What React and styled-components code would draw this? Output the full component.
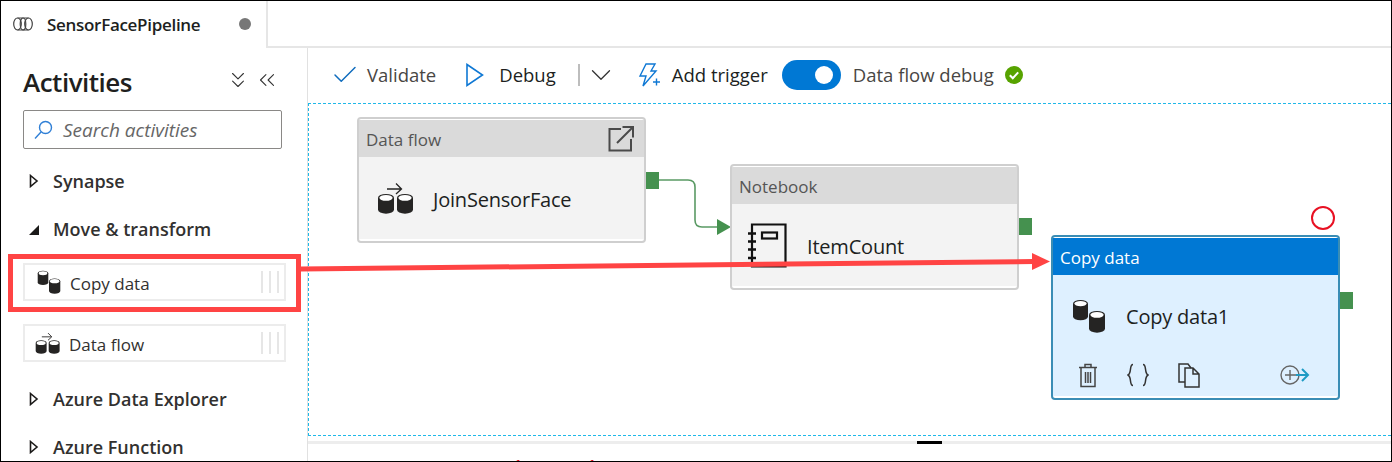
import React from 'react'
import styled, { createGlobalStyle } from 'styled-components'
import { ChevronsDown, ChevronsLeft, ChevronDown, Check } from 'lucide-react'

const GlobalStyle = createGlobalStyle`
  html, body {
    margin: 0;
    padding: 0;
    background: #fff;
  }
  * {
    box-sizing: border-box;
  }
`

export default function App() {
  return (
    <Frame>
      <GlobalStyle />
      <TabBar>
        <Tab>
          <PipelineIcon />
          <TabTitle>SensorFacePipeline</TabTitle>
          <UnsavedDot />
        </Tab>
      </TabBar>
      <Body>
        <Sidebar>
          <SideHeader>
            <SideTitle>Activities</SideTitle>
            <SideTools>
              <ChevronsDown size={26} strokeWidth={1} />
              <ChevronsLeft size={26} strokeWidth={1} />
            </SideTools>
          </SideHeader>
          <SearchBox>
            <SearchIcon />
            <SearchText>Search activities</SearchText>
          </SearchBox>
          <Group>
            <Closed />
            Synapse
          </Group>
          <Group>
            <Open />
            Move &amp; transform
          </Group>
          <Item $first>
            <CopyDataIcon size={24} />
            <ItemLabel $gap={9}>Copy data</ItemLabel>
            <Grip />
          </Item>
          <Item>
            <DataFlowIcon size={26} $shift={-2} />
            <ItemLabel $gap={8}>Data flow</ItemLabel>
            <Grip />
          </Item>
          <Group $after>
            <Closed />
            Azure Data Explorer
          </Group>
          <Group>
            <Closed />
            Azure Function
          </Group>
        </Sidebar>
        <Main>
          <Toolbar>
            <Check size={30} color="#0f6cbd" strokeWidth={1.2} />
            <ToolLabel $muted $gap={7}>Validate</ToolLabel>
            <PlayIcon />
            <ToolLabel $gap={15}>Debug</ToolLabel>
            <ToolDivider />
            <ChevronDown size={34} color="#333" strokeWidth={0.9} />
            <BoltIcon />
            <ToolLabel $gap={11}>Add trigger</ToolLabel>
            <Toggle>
              <Knob />
            </Toggle>
            <ToolLabel $muted $gap={12}>Data flow debug</ToolLabel>
            <StatusIcon />
          </Toolbar>
          <Canvas>
            <Connector />
            <Node $x={48} $y={13}>
              <NodeHeader>
                Data flow
                <OpenIcon />
              </NodeHeader>
              <NodeBody>
                <DataFlowIcon size={38} />
                <NodeName>JoinSensorFace</NodeName>
              </NodeBody>
              <Port $top={53} />
            </Node>
            <Node $x={421} $y={60}>
              <NodeHeader>Notebook</NodeHeader>
              <NodeBody>
                <NotebookIcon />
                <NodeName $gap={20}>ItemCount</NodeName>
              </NodeBody>
              <Port $top={52} />
            </Node>
            <Node $x={742} $y={131} $selected>
              <NodeHeader $selected>Copy data</NodeHeader>
              <NodeBody $selected>
                <CopyDataIcon size={34} />
                <NodeName $gap={20}>Copy data1</NodeName>
              </NodeBody>
              <NodeActions>
                <TrashIcon />
                <BracesIcon />
                <PagesIcon />
                <AddOutputIcon />
              </NodeActions>
              <Port $top={55} />
              <ErrorRing />
            </Node>
          </Canvas>
          <Splitter>
            <SplitterHandle />
          </Splitter>
          <Output>
            <RedMark $x={206}>1</RedMark>
            <RedMark $x={280}>1</RedMark>
          </Output>
        </Main>
      </Body>
      <Callout />
    </Frame>
  )
}

function Cylinder({ x, y, w, h }) {
  const ry = w * 0.24
  return (
    <>
      <path
        d={`M${x} ${y + ry}a${w / 2} ${ry} 0 0 1 ${w} 0v${h}a${w / 2} ${ry} 0 0 1 -${w} 0z`}
        fill="#252423"
      />
      <ellipse cx={x + w / 2} cy={y + ry} rx={w / 2 - 1.4} ry={ry - 0.9} fill="#fff" />
    </>
  )
}

function CopyDataIcon({ size }) {
  return (
    <svg width={size} height={size} viewBox="0 0 34 34">
      <Cylinder x={1} y={1} w={15} h={13} />
      <Cylinder x={17} y={12} w={16} h={14} />
    </svg>
  )
}

function DataFlowIcon({ size, $shift }) {
  return (
    <ShiftedSvg $shift={$shift} width={size} height={size} viewBox="0 0 38 38">
      <Cylinder x={1} y={15} w={16} h={12} />
      <Cylinder x={20} y={15} w={16} h={12} />
      <path d="M10 10h14M19 4.500l5.500 5.500-5.500 5" fill="none" stroke="#252423" strokeWidth="1.3" />
    </ShiftedSvg>
  )
}

function PipelineIcon() {
  return (
    <svg width="20" height="14" viewBox="0 0 20 14" fill="none" stroke="#444" strokeWidth="1.2">
      <ellipse cx="4.500" cy="7" rx="3.800" ry="6" />
      <ellipse cx="15.500" cy="7" rx="3.800" ry="6" />
      <path d="M4.500 1h11M4.500 13h11" />
      <ellipse cx="10" cy="7" rx="2.800" ry="6" />
    </svg>
  )
}

function SearchIcon() {
  return (
    <svg width="19" height="20" viewBox="0 0 19 20" fill="none" stroke="#2f7fd6" strokeWidth="1.4">
      <circle cx="11.500" cy="7.500" r="6" />
      <path d="M7 12L1 18.500" />
    </svg>
  )
}

function Closed() {
  return (
    <Caret viewBox="0 0 10 14" fill="none" stroke="#1b1a19" strokeWidth="1.6">
      <path d="M1.500 1.500L8 7 1.500 12.500z" />
    </Caret>
  )
}

function Open() {
  return (
    <Caret viewBox="0 0 12 14">
      <path d="M11 3v10H1z" fill="#1b1a19" />
    </Caret>
  )
}

function Grip() {
  return (
    <GripBox>
      <i />
      <i />
      <i />
    </GripBox>
  )
}

function PlayIcon() {
  return (
    <ToolSvg $left={30} width="18" height="24" viewBox="0 0 18 24" fill="none" stroke="#0f78d4" strokeWidth="1.6">
      <path d="M1 1.500L16.500 12 1 22.500z" />
    </ToolSvg>
  )
}

function BoltIcon() {
  return (
    <ToolSvg $left={20} width="23" height="24" viewBox="0 0 23 24" fill="none" stroke="#0f78d4" strokeWidth="1.4">
      <path d="M8 1h9l-4 7h5L5 23l3-10H2z" />
      <path d="M15 19h7M18.500 15.500v7" />
    </ToolSvg>
  )
}

function StatusIcon() {
  return (
    <ToolSvg $left={11} width="18" height="18" viewBox="0 0 18 18">
      <circle cx="9" cy="9" r="9" fill="#57a300" />
      <path d="M4.800 9.200l3 3 5.400-5.800" fill="none" stroke="#fff" strokeWidth="2" />
    </ToolSvg>
  )
}

function OpenIcon() {
  return (
    <CornerSvg width="27" height="27" viewBox="0 0 27 27" fill="none" stroke="#4a4a4a" strokeWidth="2">
      <path d="M13 4H1.500v21.500H23V14" />
      <path d="M9 18L25 2M14.500 2H25v10.500" />
    </CornerSvg>
  )
}

function NotebookIcon() {
  return (
    <NotebookSvg width="39" height="45" viewBox="0 0 39 45" fill="none" stroke="#111" strokeWidth="2.200">
      <path d="M4 1.500H37.500V43.500H4z" />
      <rect x="14" y="9.500" width="15" height="6" />
      <path d="M0 10.500h8M0 18.500h8M0 26.500h8M0 35h8" strokeWidth="2.400" />
    </NotebookSvg>
  )
}

function TrashIcon() {
  return (
    <svg width="20" height="25" viewBox="0 0 20 25" fill="none" stroke="#444" strokeWidth="1.500">
      <path d="M1 4.500h18M7 4V1.500h6V4M3 5v18.500h14V5M7.500 9v11M10 9v11M12.500 9v11" />
    </svg>
  )
}

function BracesIcon() {
  return (
    <ActionSvg $left={29} width="22" height="24" viewBox="0 0 22 24" fill="none" stroke="#333" strokeWidth="1.500">
      <path d="M6 1.500C2 1.500 5 10 1 12c4 2 1 10.500 5 10.500M16 1.500c4 0 1 8.500 5 10.500-4 2-1 10.500-5 10.500" />
    </ActionSvg>
  )
}

function PagesIcon() {
  return (
    <ActionSvg $left={29} width="22" height="25" viewBox="0 0 22 25" fill="none" stroke="#333" strokeWidth="1.500">
      <path d="M7 19H1V1h9l3 4" />
      <path d="M7 5h8l6 6v13H7zM15 5v6h6" />
    </ActionSvg>
  )
}

function AddOutputIcon() {
  return (
    <ActionSvg $left={80} width="30" height="20" viewBox="0 0 30 20" fill="none" strokeWidth="1.400">
      <circle cx="10" cy="10" r="9" stroke="#666" />
      <path d="M5 10h11M10 5v10" stroke="#666" />
      <path d="M16 10h12M22 4l6 6-6 6" stroke="#1e9bc4" strokeWidth="2" />
    </ActionSvg>
  )
}

function Connector() {
  return (
    <ConnectorSvg width="80" height="70" viewBox="0 0 80 70" fill="none">
      <path d="M0 7h29q7 0 7 7v33q0 7 7 7h15" stroke="#5a9a64" strokeWidth="1.600" />
      <path d="M58 46l14 8-14 8z" fill="#45914f" />
    </ConnectorSvg>
  )
}

function Callout() {
  return (
    <CalloutSvg width="1392" height="462" viewBox="0 0 1392 462" fill="none">
      <rect x="10.500" y="256.500" width="288" height="53" stroke="#ff4444" strokeWidth="5" />
      <path d="M301 269L1034 261.500" stroke="#ff4444" strokeWidth="5" />
      <path d="M1032 253l18 8.500-18 8.500z" fill="#ff4444" />
    </CalloutSvg>
  )
}

const font = `'Open Sans', 'Noto Sans', sans-serif`

const Frame = styled.div`
  position: relative;
  display: flex;
  flex-direction: column;
  width: 1392px;
  height: 462px;
  overflow: hidden;
  border: 1px solid #000;
  background: #fff;
  color: #252423;
  font-family: ${font};
`
const TabBar = styled.header`
  display: flex;
  flex: none;
  height: 47px;
  border-bottom: 2px solid #e6e6e6;
`
const Tab = styled.div`
  display: flex;
  align-items: center;
  width: 267px;
  height: 47px;
  padding: 0 15px 2px 12px;
  background: #fff;
  border-right: 2px solid #e6e6e6;
`
const TabTitle = styled.span`
  margin: 2px 0 0 14px;
  font-size: 17px;
  font-weight: 600;
  letter-spacing: -0.3px;
  color: #201f1e;
`
const UnsavedDot = styled.span`
  width: 12px;
  height: 12px;
  margin-left: auto;
  border-radius: 50%;
  background: #777;
`
const Body = styled.div`
  display: flex;
  flex: 1;
  min-height: 0;
`
const Sidebar = styled.aside`
  flex: none;
  width: 307px;
  padding: 0 22px;
  border-right: 1px solid #e1e1e1;
  overflow: hidden;
`
const SideHeader = styled.div`
  display: flex;
  align-items: center;
  justify-content: space-between;
  height: 62px;
  padding: 6px 5px 0 0;
`
const SideTitle = styled.h2`
  margin: 0;
  font-size: 26px;
  font-weight: 600;
  letter-spacing: -0.5px;
  color: #201f1e;
`
const SideTools = styled.div`
  display: flex;
  gap: 3px;
  margin-top: -5px;
  color: #333;
`
const SearchBox = styled.div`
  display: flex;
  align-items: center;
  width: 259px;
  height: 39px;
  padding-left: 10px;
  border: 1px solid #8a8886;
  border-radius: 2px;
`
const SearchText = styled.span`
  margin-left: 10px;
  font-size: 19px;
  font-style: italic;
  color: #666;
`
const Group = styled.div`
  display: flex;
  align-items: center;
  height: 48px;
  margin-top: ${p => (p.$after ? '13px' : '0')};
  font-size: 18px;
  font-weight: 600;
  white-space: nowrap;
  color: #323130;
  &:nth-of-type(3) {
    margin-top: 8px;
  }
`
const Caret = styled.svg`
  width: 12px;
  height: 14px;
  margin: 0 13px 0 5px;
`
const Item = styled.div`
  display: flex;
  align-items: center;
  width: 263px;
  height: 38px;
  margin-top: ${p => (p.$first ? '10px' : '23px')};
  padding-left: 12px;
  border: 2px solid #ececec;
`
const ItemLabel = styled.span`
  margin-left: ${p => p.$gap}px;
  padding-top: 2px;
  font-size: 17px;
  color: #323130;
`
const GripBox = styled.div`
  display: flex;
  gap: 6px;
  margin-left: auto;
  padding-right: 5px;
  i {
    width: 2px;
    height: 22px;
    background: #e6e6e6;
  }
`
const ShiftedSvg = styled.svg`
  flex: none;
  margin-left: ${p => p.$shift || 0}px;
`
const Main = styled.main`
  position: relative;
  display: flex;
  flex: 1;
  flex-direction: column;
  min-width: 0;
`
const Toolbar = styled.div`
  display: flex;
  align-items: center;
  flex: none;
  height: 55px;
  padding: 0 0 2px 22px;
`
const ToolLabel = styled.span`
  margin-left: ${p => p.$gap}px;
  font-size: 18.5px;
  color: ${p => (p.$muted ? '#484644' : '#201f1e')};
`
const ToolSvg = styled.svg`
  flex: none;
  margin-left: ${p => p.$left}px;
`
const ToolDivider = styled.span`
  width: 2px;
  height: 22px;
  margin: 0 4px 0 22px;
  background: #bdbdbd;
`
const Toggle = styled.div`
  display: flex;
  align-items: center;
  justify-content: flex-end;
  width: 59px;
  height: 30px;
  margin-left: 14px;
  padding-right: 8px;
  border-radius: 15px;
  background: #0078d4;
`
const Knob = styled.span`
  width: 18px;
  height: 18px;
  border-radius: 50%;
  background: #fff;
`
const Canvas = styled.section`
  position: relative;
  flex: none;
  height: 333px;
  border: 1px dashed #1fb8e8;
  border-right: 0;
`
const ConnectorSvg = styled.svg`
  position: absolute;
  left: 350px;
  top: 69px;
`
const Node = styled.article`
  position: absolute;
  left: ${p => p.$x}px;
  top: ${p => p.$y}px;
  display: flex;
  flex-direction: column;
  width: 289px;
  height: ${p => (p.$selected ? '165px' : '126px')};
  padding: 1px 0 2px;
  border: ${p => (p.$selected ? '2px solid #3a8db5' : '2px solid #cfcfcf')};
  border-radius: 4px;
  background: #fff;
`
const NodeHeader = styled.div`
  position: relative;
  display: flex;
  align-items: center;
  flex: none;
  height: 37px;
  padding: 1px 0 0 7px;
  font-size: 17px;
  background: ${p => (p.$selected ? '#0078d4' : '#dadada')};
  color: ${p => (p.$selected ? '#fff' : '#555')};
`
const CornerSvg = styled.svg`
  position: absolute;
  right: 9px;
  top: 5px;
`
const NodeBody = styled.div`
  display: flex;
  align-items: center;
  flex: 1;
  min-height: 0;
  padding-left: ${p => (p.$selected ? '19px' : '18px')};
  background: ${p => (p.$selected ? '#def0ff' : '#f3f3f3')};
`
const NodeName = styled.span`
  margin: 2px 0 0 ${p => p.$gap || 18}px;
  font-size: 20px;
  letter-spacing: -0.2px;
  color: #201f1e;
`
const NotebookSvg = styled.svg`
  flex: none;
  margin-left: -2px;
`
const NodeActions = styled.div`
  display: flex;
  align-items: center;
  flex: none;
  height: 40px;
  padding: 0 0 2px 25px;
  background: #def0ff;
`
const ActionSvg = styled.svg`
  margin-left: ${p => p.$left}px;
`
const Port = styled.span`
  position: absolute;
  right: -15px;
  top: ${p => p.$top}px;
  width: 13px;
  height: 17px;
  background: #45914f;
`
const ErrorRing = styled.span`
  position: absolute;
  right: 3px;
  top: -31px;
  width: 24px;
  height: 24px;
  border: 2px solid #e81123;
  border-radius: 50%;
`
const Splitter = styled.div`
  display: flex;
  justify-content: center;
  flex: none;
  height: 3px;
  margin-top: 5px;
  padding-left: 160px;
  background: #ededed;
`
const SplitterHandle = styled.span`
  width: 25px;
  height: 3px;
  background: #000;
`
const Output = styled.div`
  position: relative;
  flex: 1;
  overflow: hidden;
`
const RedMark = styled.span`
  position: absolute;
  left: ${p => p.$x}px;
  top: 11px;
  font-size: 13px;
  font-weight: 700;
  color: #e0102a;
`
const CalloutSvg = styled.svg`
  position: absolute;
  left: -1px;
  top: -1px;
  pointer-events: none;
`
